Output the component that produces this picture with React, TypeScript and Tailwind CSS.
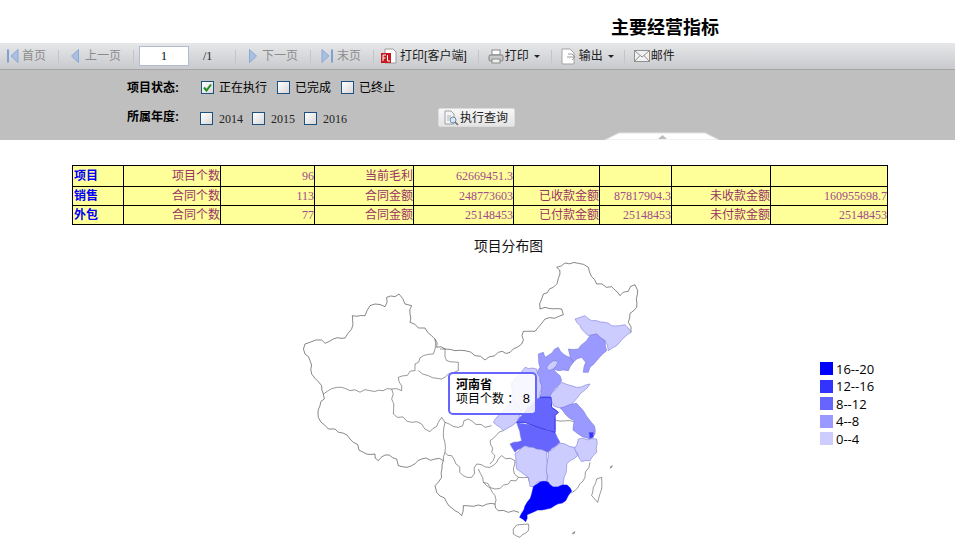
import React from "react";

const CJK = "font-['Liberation_Sans','Noto_Sans_CJK_SC',sans-serif]";

const Sep = ({ ml, mr }: { ml: string; mr: string }) => (
  <span className={`w-px h-[13px] bg-[#c2c4c7] shrink-0 ${ml} ${mr}`} />
);

// adds a fine irregular edge to a hand-traced border line
const wiggle = (d: string, amp: number, step: number) => {
  const closed = /Z\s*$/.test(d);
  const n = (d.match(/-?\d+(\.\d+)?/g) ?? []).map(Number);
  const p: [number, number][] = [];
  for (let i = 0; i + 1 < n.length; i += 2) p.push([n[i], n[i + 1]]);
  if (closed) p.push(p[0]);
  let out = `M${p[0][0]} ${p[0][1]}`;
  let seed = n.length * 7 + n[0];
  for (let i = 1; i < p.length; i++) {
    const [x0, y0] = p[i - 1];
    const [x1, y1] = p[i];
    const len = Math.hypot(x1 - x0, y1 - y0);
    const k = Math.max(1, Math.round(len / step));
    for (let j = 1; j <= k; j++) {
      const t = j / k;
      seed = (seed * 9301 + 49297) % 233280;
      const r = j === k ? 0 : (seed / 233280 - 0.5) * 2 * amp;
      const nx = len ? -(y1 - y0) / len : 0;
      const ny = len ? (x1 - x0) / len : 0;
      out += ` L${(x0 + (x1 - x0) * t + nx * r).toFixed(1)} ${(y0 + (y1 - y0) * t + ny * r).toFixed(1)}`;
    }
  }
  return out + (closed ? " Z" : "");
};

const Navicon = ({ dir, bar }: { dir: "l" | "r"; bar: boolean }) => (
  <svg width={bar ? 12 : 8} height="14" viewBox={bar ? "0 0 12 14" : "0 0 8 14"} className="shrink-0">
    {dir === "l" ? (
      bar ? (
        <>
          <rect x="0" y="0.5" width="2" height="13" fill="#7f9fd0" />
          <path d="M11 0.5 L4 7 L11 13.5 Z" fill="#a9c0e2" stroke="#8aa8d6" />
        </>
      ) : (
        <path d="M7.5 0.5 L0.5 7 L7.5 13.5 Z" fill="#a9c0e2" stroke="#8aa8d6" />
      )
    ) : bar ? (
      <>
        <rect x="10" y="0.5" width="2" height="13" fill="#7f9fd0" />
        <path d="M1 0.5 L8 7 L1 13.5 Z" fill="#a9c0e2" stroke="#8aa8d6" />
      </>
    ) : (
      <path d="M0.5 0.5 L7.5 7 L0.5 13.5 Z" fill="#a9c0e2" stroke="#8aa8d6" />
    )}
  </svg>
);

const Caret = ({ ml }: { ml: string }) => (
  <span className={`w-0 h-0 border-x-[3px] border-x-transparent border-t-[3px] border-t-[#222] shrink-0 ${ml}`} />
);

const Check = ({ checked, ml }: { checked?: boolean; ml?: string }) => (
  <span
    className={`w-[13px] h-[13px] border border-[#1c5180] bg-gradient-to-br from-white to-[#d8d8d8] flex items-center justify-center shrink-0 ${ml ?? ""}`}
  >
    {checked && (
      <svg width="9" height="9" viewBox="0 0 9 9">
        <path d="M1 4.5 L3.5 7.5 L8 1.5" fill="none" stroke="#1e8e1e" strokeWidth="2" />
      </svg>
    )}
  </span>
);

const rows = [
  ["项目", "项目个数", "96", "当前毛利", "62669451.3", "", "", "", ""],
  ["销售", "合同个数", "113", "合同金额", "248773603", "已收款金额", "87817904.3", "未收款金额", "160955698.7"],
  ["外包", "合同个数", "77", "合同金额", "25148453", "已付款金额", "25148453", "未付款金额", "25148453"],
];

const widths = [51, 97, 94, 99, 100, 86, 72, 99, 117];
const rowH = ["h-[21px]", "h-[19px]", "h-[19px]"];

const legend = [
  ["#0000ff", "16--20"],
  ["#3333ff", "12--16"],
  ["#6666ff", "8--12"],
  ["#9999ff", "4--8"],
  ["#ccccff", "0--4"],
];

const outer =
  "M30 270 L45 265 L62 258 L80 258 L90 268 L115 255 L150 252 L170 225 L172 185 L210 185 L225 155 L240 150 L270 158 L275 130 L300 128 L312 120 L330 150 L350 155 L345 205 L370 222 L390 222 L420 255 L425 280 L450 285 L480 290 L510 290 L540 305 L570 318 L610 295 L645 295 L680 270 L685 232 L720 232 L750 195 L805 182 L800 165 L750 160 L735 165 L745 120 L775 100 L795 60 L785 40 L810 27 L850 28 L880 40 L905 90 L950 98 L975 125 L1020 92 L1028 110 L1025 160 L1005 178 L1000 205 L1008 235";
const west =
  "M672 775 L640 775 L610 770 L600 750 L550 753 L505 755 L500 785 L480 770 L455 745 L425 715 L420 695 L440 670 L445 620 L420 615 L380 615 L350 635 L310 635 L305 615 L270 603 L250 620 L240 600 L205 595 L165 555 L120 525 L100 525 L70 490 L75 455 L88 435 L85 420 L80 395 L50 360 L45 320 L30 300 L30 270";

const inner = [
  "M85 420 L125 400 L165 410 L225 410 L290 405 L320 410 L310 370 L360 350 L360 330 L385 305 L415 300 L420 255",
  "M435 285 L450 285 L455 320 L490 325 L490 350 L460 360 L440 375 L400 365 L370 350",
  "M290 405 L290 435 L295 480 L350 505 L380 510 L405 533 L430 505 L440 490 L450 505 L490 520 L520 495 L570 520 L590 515",
  "M450 505 L450 595 L445 620",
  "M450 595 L470 605 L505 665 L530 670 L545 630 L585 640 L620 605 L660 620 L655 645 L670 670 L640 690 L600 705 L565 685 L550 645",
  "M565 685 L600 725 L600 750",
  "M625 530 L585 560 L590 595 L600 605 L585 630",
  "M670 670 L700 670 L720 700",
  "M828 717 L870 670 L885 625",
  "M770 485 L785 500 L850 505",
];

const islands = [
  "M905 675 L920 670 L920 705 L908 745 L890 725 L895 700 Z",
  "M655 825 L665 813 L700 810 L700 830 L675 850 L655 840 Z",
  "M945 640 L952 635 L948 642 Z",
  "M832 838 L840 833 L836 840 Z",
];

const regions: [string, string][] = [
  ["#ccccff", "M840 195 L870 185 L890 200 L930 205 L950 215 L990 212 L1008 235 L990 248 L965 275 L940 290 L930 260 L905 240 L880 245 L860 225 Z"],
  ["#9999ff", "M820 285 L850 285 L875 260 L885 245 L905 240 L930 260 L935 290 L905 320 L885 340 L880 355 L865 355 L872 325 L860 310 L845 315 L835 325 L825 305 Z"],
  ["#9999ff", "M730 300 L745 295 L750 310 L790 280 L805 300 L825 310 L835 325 L820 350 L790 350 L775 345 L795 365 L800 380 L770 415 L765 430 L735 430 L740 395 L725 365 L735 340 Z"],
  ["#ccccff", "M755 340 L775 320 L790 322 L775 345 L760 350 Z"],
  ["#ccccff", "M650 385 L690 340 L725 345 L740 395 L735 430 L700 460 L680 470 L655 440 Z"],
  ["#ccccff", "M595 505 L610 485 L650 440 L680 470 L665 505 L625 530 Z"],
  ["#ccccff", "M765 425 L800 385 L845 400 L885 390 L855 420 L835 445 L815 465 L775 455 Z"],
  ["#9999ff", "M796 462 L845 448 L868 475 L898 515 L900 540 L888 557 L862 548 L834 528 L838 500 L812 482 Z"],
  ["#3333ff", "M882 535 L895 535 L895 550 L884 553 Z"],
  ["#6666ff", "M735 430 L768 430 L770 460 L790 475 L780 485 L780 535 L730 520 L690 505 L665 505 L685 480 L690 470 L700 460 Z"],
  ["#6666ff", "M645 570 L680 560 L665 505 L690 510 L730 520 L780 535 L795 565 L760 595 L725 585 L690 575 L660 595 Z"],
  ["#ccccff", "M660 600 L690 575 L725 585 L755 593 L760 635 L755 685 L725 685 L720 700 L705 697 L700 670 L665 645 Z"],
  ["#ccccff", "M760 593 L795 567 L840 580 L848 605 L815 630 L805 695 L775 700 L755 683 Z"],
  ["#ccccff", "M838 585 L850 555 L905 555 L905 595 L885 620 L860 623 Z"],
  ["#0000ff", "M716 697 L735 684 L759 684 L774 699 L816 693 L830 711 L812 740 L768 762 L728 768 L696 782 L692 803 L674 790 L690 756 L706 733 Z"],
];

export default function App() {
  return (
    <div className={`w-[955px] h-[552px] bg-white overflow-hidden ${CJK}`}>
      <div className="h-[43px] flex items-end justify-center pl-[375px] pb-[3px]">
        <h1 className="text-[18px] leading-[24px] font-bold text-black">主要经营指标</h1>
      </div>

      <div className="h-[27px] bg-gradient-to-b from-[#e6e7e9] to-[#c8cacd] border-b border-[#a6a6a6] flex items-center text-[12px]">
        <div className="ml-[7px] flex items-center text-[#8c8c8c]">
          <Navicon dir="l" bar />
          <span className="ml-[3px]">首页</span>
        </div>
        <Sep ml="ml-[12px]" mr="mr-[12px]" />
        <Navicon dir="l" bar={false} />
        <span className="ml-[6px] text-[#8c8c8c]">上一页</span>
        <Sep ml="ml-[12px]" mr="mr-[5px]" />
        <span className="w-[50px] h-[20px] bg-white border border-[#b4bad2] flex items-center justify-center text-[12px] font-['Liberation_Serif',serif] text-black shrink-0">1</span>
        <span className="ml-[14px] w-[32px] text-[12px] font-['Liberation_Serif',serif] text-[#222] shrink-0">/1</span>
        <Sep ml="ml-0" mr="mr-[13px]" />
        <Navicon dir="r" bar={false} />
        <span className="ml-[5px] text-[#8c8c8c]">下一页</span>
        <Sep ml="ml-[12px]" mr="mr-[10px]" />
        <Navicon dir="r" bar />
        <span className="ml-[4px] text-[#8c8c8c]">末页</span>
        <Sep ml="ml-[12px]" mr="mr-[7px]" />
        <svg width="16" height="16" viewBox="0 0 16 16" className="shrink-0">
          <path d="M4 1 H12 L15 4 V15 H4 Z" fill="#fff" stroke="#9a9a9a" />
          <rect x="0" y="5" width="10" height="10" fill="#c8161d" />
          <path d="M2 7 H5 M2 7 V13 M2 10 H4.5 M6.5 7 V13 H9" stroke="#fff" strokeWidth="1" fill="none" />
        </svg>
        <span className="ml-[3px] text-[#222] whitespace-nowrap">打印[客户端]</span>
        <Sep ml="ml-[11px]" mr="mr-[9px]" />
        <svg width="16" height="15" viewBox="0 0 16 15" className="shrink-0">
          <rect x="4" y="1" width="8" height="5" fill="#fff" stroke="#8a8a8a" />
          <rect x="1" y="6" width="14" height="6" rx="1.5" fill="#c9c9c9" stroke="#7c7c7c" />
          <rect x="4" y="10" width="8" height="4" fill="#eee" stroke="#8a8a8a" />
        </svg>
        <span className="ml-[1px] text-[#222]">打印</span>
        <Caret ml="ml-[5px]" />
        <Sep ml="ml-[11px]" mr="mr-[9px]" />
        <svg width="15" height="17" viewBox="0 0 15 17" className="shrink-0">
          <path d="M1 1 H9 L13 5 V16 H1 Z" fill="#fff" stroke="#a3a3a3" />
          <path d="M7 6 H11 L14 9 L11 12 M6 9 H13" fill="none" stroke="#9a9a9a" />
        </svg>
        <span className="ml-[3px] text-[#222]">输出</span>
        <Caret ml="ml-[5px]" />
        <Sep ml="ml-[10px]" mr="mr-[9px]" />
        <svg width="16" height="12" viewBox="0 0 16 12" className="shrink-0">
          <rect x="0.5" y="0.5" width="15" height="11" fill="#f1f1f1" stroke="#8f8f8f" />
          <path d="M1 1 L8 7 L15 1 M1 11 L6 5.5 M15 11 L10 5.5" fill="none" stroke="#8f8f8f" />
        </svg>
        <span className="ml-[1px] text-[#222]">邮件</span>
      </div>

      <div className="relative h-[70px] bg-[#bfbfbf] pl-[127px] pt-[9px] text-[12px] text-black">
        <div className="h-[17px] flex items-center">
          <span className="w-[74px] font-bold whitespace-nowrap">项目状态:</span>
          <Check checked />
          <span className="ml-[5px]">正在执行</span>
          <Check ml="ml-[10px]" />
          <span className="ml-[5px]">已完成</span>
          <Check ml="ml-[10px]" />
          <span className="ml-[5px]">已终止</span>
        </div>
        <div className="mt-[13px] h-[19px] flex items-center">
          <span className="w-[73px] font-bold whitespace-nowrap mb-[3px]">所属年度:</span>
          {["2014", "2015", "2016"].map((y, i) => (
            <React.Fragment key={y}>
              <Check ml={i ? "ml-[9px]" : "ml-0"} />
              <span className="ml-[6px] w-[24px] text-[12px] font-['Liberation_Serif',serif] text-[#222]">{y}</span>
            </React.Fragment>
          ))}
          <span className="ml-[91px] w-[77px] h-[19px] mb-[2px] bg-gradient-to-b from-[#f7f7f7] to-[#e4e4e4] border border-[#dcdcdc] rounded-[2px] flex items-center pl-[4px] shrink-0">
            <svg width="16" height="16" viewBox="0 0 16 16" className="shrink-0">
              <path d="M2 1 H8 L11 4 V14 H2 Z" fill="#f4f4f4" stroke="#9aa0a8" />
              <path d="M4 6 H8 M4 8 H7 M4 10 H6" stroke="#b0b4b8" />
              <circle cx="10" cy="10" r="3" fill="#d8e8f5" stroke="#6f8aa5" />
              <path d="M12 12 L15 15" stroke="#6f6f6f" strokeWidth="1.6" />
            </svg>
            <span className="ml-[1px] whitespace-nowrap text-[#222]">执行查询</span>
          </span>
        </div>
        <svg width="114" height="8" viewBox="0 0 114 8" className="absolute left-[605px] bottom-0">
          <path d="M0 8 L14 1 H100 L114 8 Z" fill="#fff" stroke="#e4e4e4" />
          <path d="M53 7 L57.5 3 L62 7 Z" fill="#bdbdbd" />
        </svg>
      </div>

      <div className="pt-[25px] pl-[72px]">
        <table className="border-collapse table-fixed w-[815px] bg-[#ffff99] border border-black">
          <colgroup>
            {widths.map((w, i) => (
              <col key={i} style={{ width: w }} />
            ))}
          </colgroup>
          <tbody>
            {rows.map((r, ri) => (
              <tr key={ri} className={rowH[ri]}>
                {r.map((c, ci) => {
                  const isNum = ci > 0 && /^[0-9.]+$/.test(c);
                  const base = "border border-black p-0 whitespace-nowrap overflow-hidden";
                  if (ci === 0)
                    return (
                      <td key={ci} className={`${base} pl-[1px] text-left text-[12px] font-bold text-[#0000ff]`}>
                        {c}
                      </td>
                    );
                  return (
                    <td
                      key={ci}
                      className={`${base} text-right ${
                        isNum
                          ? "text-[12px] font-['Liberation_Serif',serif] text-[#a04a8c]"
                          : "text-[12px] text-[#993366]"
                      }`}
                    >
                      {c}
                    </td>
                  );
                })}
              </tr>
            ))}
          </tbody>
        </table>
      </div>

      <div className="relative h-[326px]">
        <div className="pt-[13px] pl-[474px] text-[13.8px] leading-[18px] text-[#111]">项目分布图</div>
        <svg
          width="350"
          height="297"
          viewBox="0 0 1050 891"
          className="absolute left-[295px] top-[29px]"
        >
          <path d={wiggle(outer, 5, 14)} fill="none" stroke="#111" strokeWidth="1.5" />
          <path d={wiggle(west, 5, 14)} fill="none" stroke="#111" strokeWidth="1.5" />
          {inner.map((d, i) => (
            <path key={i} d={wiggle(d, 5, 14)} fill="none" stroke="#222" strokeWidth="1.4" />
          ))}
          {islands.map((d, i) => (
            <path key={i} d={wiggle(d, 2, 12)} fill="none" stroke="#222" strokeWidth="1.4" />
          ))}
          {regions.map(([f, d], i) => (
            <path
              key={i}
              d={wiggle(d, 2.5, 14)}
              fill={f}
              stroke={f === "#0000ff" ? "#0000ff" : "#6f6fd8"}
              strokeWidth="1.6"
              strokeLinejoin="round"
            />
          ))}
          <path d="M735 430 L768 430 L770 460 L790 475 L780 485 L780 535 L730 520 L690 505 L665 505" fill="none" stroke="#3a3aee" strokeWidth="3" />
        </svg>

        <div className="absolute left-[448px] top-[147px] w-[89px] h-[43px] border-2 border-[#6666ff] rounded-[5px] bg-white/85 pl-[6px] pt-[4px] text-[12px] leading-[14px] text-black">
          <div className="font-bold">河南省</div>
          <div className="whitespace-nowrap">
            项目个数 ： <span className="text-[13px]">8</span>
          </div>
        </div>

        <div className="absolute left-[820px] top-[137px] flex flex-col gap-[4px]">
          {legend.map(([c, t]) => (
            <div key={t} className="h-[13.5px] flex items-center">
              <span className="w-[13px] h-[13px] shrink-0" style={{ background: c }} />
              <span className="ml-[3px] text-[13px] leading-[14px] font-['Open_Sans',sans-serif] text-black">{t}</span>
            </div>
          ))}
        </div>
      </div>
    </div>
  );
}
